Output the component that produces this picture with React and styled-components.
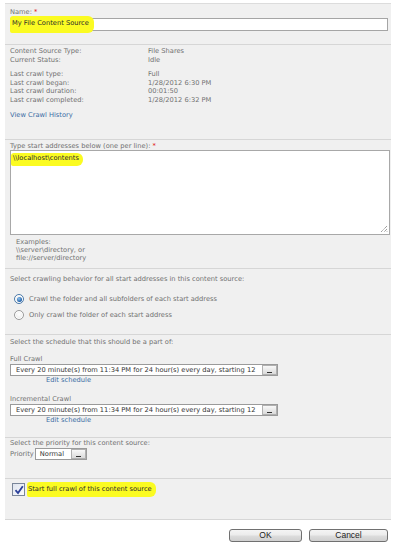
import React from "react";
import styled, { createGlobalStyle } from "styled-components";

const Global = createGlobalStyle`
  html, body { margin: 0; padding: 0; background: #fff; }
  body { font-family: "DejaVu Sans", Verdana, sans-serif; font-size: 6.7px; color: #707070; }
  * { box-sizing: border-box; }
`;

const Page = styled.div`
  width: 397px;
  height: 552px;
  padding-left: 5px;
  padding-top: 3px;
`;

const Panel = styled.div`
  width: 386px;
  background: #f0f0f0;
  border-top: 1px solid #dcdcdc;
`;

const Section = styled.div`
  padding: ${(p) => p.$pad || "4px 0 0 5px"};
  height: ${(p) => p.$h}px;
  border-bottom: 1px solid #d6d6d6;
`;

const Label = styled.div`
  line-height: ${(p) => p.$lh || 9}px;
  color: #707070;
`;

const Req = styled.span`
  color: #d00;
`;

const Hl = styled.span`
  background: #fbfb22;
  color: #2a2a2a;
  border-radius: 3px 6px 6px 2px;
  padding: ${(p) => p.$pad || "2px 4px 3px 2px"};
  margin-left: ${(p) => p.$ml || 0}px;
`;

const TextInput = styled.div`
  width: 378px;
  height: 13px;
  background: #fff;
  border: 1px solid #a5a5a5;
  margin-top: 1px;
  display: flex;
  align-items: center;
  line-height: 11px;
`;

const InfoGrid = styled.div`
  display: grid;
  grid-template-columns: 138px 1fr;
  line-height: 8.5px;
  color: #707070;
`;

const Gap = styled.div`
  height: ${(p) => p.$h}px;
`;

const Link = styled.div`
  color: #3a6ea5;
  line-height: 9px;
  padding-left: ${(p) => p.$pl || 0}px;
`;

const TextArea = styled.div`
  position: relative;
  width: 380px;
  height: 85px;
  background: #fff;
  border: 1px solid #a8a8a8;
  padding: 2px 0 0 1px;
  line-height: 10px;
`;

const Grip = styled.svg`
  position: absolute;
  right: 1px;
  bottom: 1px;
`;

const Examples = styled.div`
  padding: 3px 0 0 6px;
  line-height: 8px;
  color: #707070;
`;

const RadioRow = styled.label`
  display: flex;
  align-items: center;
  gap: 5px;
  height: 16px;
  padding-left: 4px;
  color: #707070;
`;

const Radio = styled.span`
  width: 10px;
  height: 10px;
  border-radius: 50%;
  border: 1px solid ${(p) => (p.$on ? "#4a79a8" : "#9a9a9a")};
  background: radial-gradient(circle at 50% 40%, #fff 0%, #e8e8e8 80%);
  display: flex;
  align-items: center;
  justify-content: center;
  box-shadow: inset 0 0 0 1px #fff;
  &::after {
    content: "";
    display: ${(p) => (p.$on ? "block" : "none")};
    width: 5px;
    height: 5px;
    border-radius: 50%;
    background: radial-gradient(circle at 40% 35%, #8fc3f0 0%, #1f5fa8 70%);
  }
`;

const SelectRow = styled.div`
  display: flex;
  align-items: center;
  gap: ${(p) => p.$gap || 0}px;
`;

const Select = styled.div`
  width: ${(p) => p.$w}px;
  height: 12px;
  background: #fff;
  border: 1px solid #9a9a9a;
  display: flex;
  align-items: center;
  justify-content: space-between;
  padding-left: ${(p) => p.$pl || 5}px;
  color: #333;
  line-height: 10px;
  white-space: nowrap;
`;

const DropBtn = styled.span`
  width: 15px;
  height: 10px;
  border: 1px solid #b0b0b0;
  background: linear-gradient(#f8f8f8, #dadada);
  display: flex;
  align-items: flex-end;
  justify-content: center;
  padding-bottom: 1px;
  &::after {
    content: "";
    width: 5px;
    height: 1.5px;
    background: #333;
  }
`;

const CheckRow = styled.div`
  display: flex;
  align-items: center;
  gap: 2px;
  padding-left: 2px;
`;

const Check = styled.span`
  width: 13px;
  height: 13px;
  border: 1px solid #7a869a;
  background: linear-gradient(135deg, #dfe4ee, #fafbfd);
  display: flex;
  align-items: center;
  justify-content: center;
`;

const Footer = styled.div`
  display: flex;
  justify-content: flex-end;
  gap: 7px;
  padding: 9px 3px 0 0;
  width: 386px;
`;

const Button = styled.button`
  width: ${(p) => p.$w}px;
  height: 13px;
  border: 1px solid #707070;
  border-radius: 3px;
  background: linear-gradient(#f4f4f4 0%, #ececec 45%, #dcdcdc 55%, #cfcfcf 100%);
  font-family: "Liberation Sans", Arial, sans-serif;
  font-size: 8.5px;
  color: #222;
  padding: 0;
  line-height: 11px;
`;

export default function App() {
  return (
    <Page>
      <Global />
      <Panel>
        <Section $h={41} $pad="4px 0 0 5px">
          <Label>
            Name: <Req>*</Req>
          </Label>
          <TextInput>
            <Hl $pad="2px 5px 4px 2px" $ml={-1}>My File Content Source</Hl>
          </TextInput>
        </Section>

        <Section $h={95} $pad="2px 0 0 5px">
          <InfoGrid>
            <span>Content Source Type:</span>
            <span>File Shares</span>
            <span>Current Status:</span>
            <span>Idle</span>
          </InfoGrid>
          <Gap $h={6} />
          <InfoGrid>
            <span>Last crawl type:</span>
            <span>Full</span>
            <span>Last crawl began:</span>
            <span>1/28/2012 6:30 PM</span>
            <span>Last crawl duration:</span>
            <span>00:01:50</span>
            <span>Last crawl completed:</span>
            <span>1/28/2012 6:32 PM</span>
          </InfoGrid>
          <Gap $h={7} />
          <Link>View Crawl History</Link>
        </Section>

        <Section $h={129} $pad="2px 0 0 5px">
          <Label $lh={8}>
            Type start addresses below (one per line): <Req>*</Req>
          </Label>
          <TextArea>
            <Hl $pad="1px 4px 4px 2px" $ml={-1}>\\localhost\contents</Hl>
            <Grip width="8" height="8" viewBox="0 0 8 8">
              <path d="M7 1 L1 7 M7 4 L4 7 M7 6.5 L6.5 7" stroke="#555" strokeWidth="0.8" strokeDasharray="1 0.8" />
            </Grip>
          </TextArea>
          <Examples>
            <div>Examples:</div>
            <div>\\server\directory, or</div>
            <div>file://server/directory</div>
          </Examples>
        </Section>

        <Section $h={66} $pad="6px 0 0 5px">
          <Label>Select crawling behavior for all start addresses in this content source:</Label>
          <Gap $h={7} />
          <RadioRow>
            <Radio $on />
            Crawl the folder and all subfolders of each start address
          </RadioRow>
          <RadioRow>
            <Radio />
            Only crawl the folder of each start address
          </RadioRow>
        </Section>

        <Section $h={103} $pad="3px 0 0 5px">
          <Label>Select the schedule that this should be a part of:</Label>
          <Gap $h={8} />
          <Label>Full Crawl</Label>
          <SelectRow>
            <Select $w={268} $pl={5}>
              Every 20 minute(s) from 11:34 PM for 24 hour(s) every day, starting 12
              <DropBtn />
            </Select>
          </SelectRow>
          <Link $pl={36}>Edit schedule</Link>
          <Gap $h={10} />
          <Label>Incremental Crawl</Label>
          <SelectRow>
            <Select $w={268} $pl={5}>
              Every 20 minute(s) from 11:34 PM for 24 hour(s) every day, starting 12
              <DropBtn />
            </Select>
          </SelectRow>
          <Link $pl={36}>Edit schedule</Link>
        </Section>

        <Section $h={41} $pad="1px 0 0 5px">
          <Label>Select the priority for this content source:</Label>
          <SelectRow $gap={1}>
            <span>Priority</span>
            <Select $w={52} $pl={4}>
              Normal
              <DropBtn />
            </Select>
          </SelectRow>
        </Section>

        <Section $h={41} $pad="3px 0 0 5px">
          <CheckRow>
            <Check>
              <svg width="10" height="10" viewBox="0 0 10 10">
                <path d="M1.5 5.2 L4 8 L8.8 1.2" fill="none" stroke="#2b3f9a" strokeWidth="1.8" />
              </svg>
            </Check>
            <Hl $pad="3px 4px 4px 1px">Start full crawl of this content source</Hl>
          </CheckRow>
        </Section>
      </Panel>
      <Footer>
        <Button $w={73}>OK</Button>
        <Button $w={79}>Cancel</Button>
      </Footer>
    </Page>
  );
}
